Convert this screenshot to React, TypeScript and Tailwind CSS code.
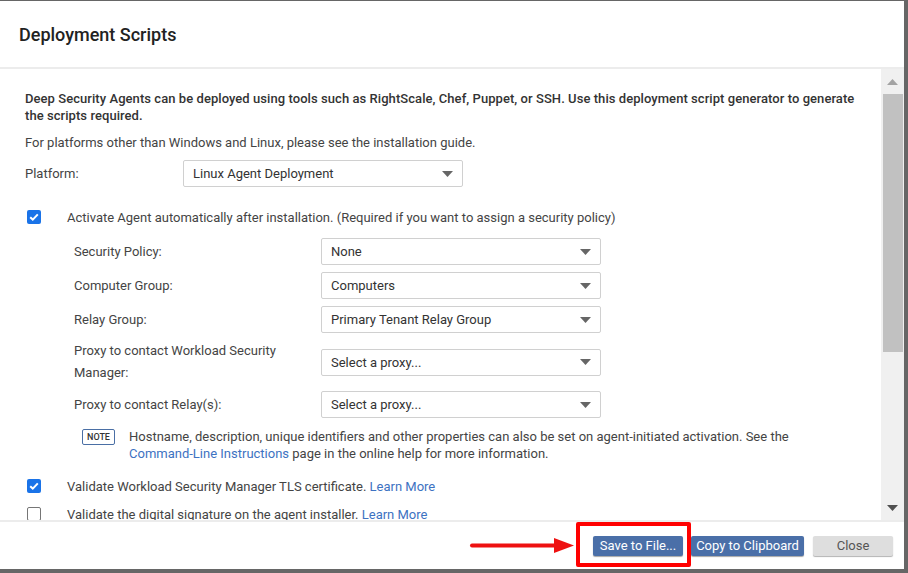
import { ReactNode } from 'react';

function Caret() {
  return (
    <svg width="11" height="6" viewBox="0 0 11 6" className="shrink-0">
      <path d="M0 0 L11 0 L5.5 6 Z" fill="#666" />
    </svg>
  );
}

function Select({ value, width = 'w-[280px]' }: { value: string; width?: string }) {
  return (
    <div
      className={`${width} h-[27px] shrink-0 flex items-center justify-between pl-[9px] pr-[9px] border border-[#d0d0d0] rounded-[2px] bg-white text-[13px] text-[#333]`}
    >
      <span>{value}</span>
      <Caret />
    </div>
  );
}

function Checkbox({ checked }: { checked: boolean }) {
  if (!checked) {
    return <div className="w-[14px] h-[14px] rounded-[2px] border border-[#767676] bg-white shrink-0" />;
  }
  return (
    <div className="w-[14px] h-[14px] rounded-[2px] bg-[#1a73e8] flex items-center justify-center shrink-0">
      <svg width="10" height="8" viewBox="0 0 10 8">
        <path d="M1.2 4.2 L3.8 6.6 L8.8 1.4" stroke="white" strokeWidth="2" fill="none" />
      </svg>
    </div>
  );
}

function CheckRow({ checked, children }: { checked: boolean; children: ReactNode }) {
  return (
    <div className="h-[28px] flex items-center">
      <div className="w-[42px] pl-[2px]">
        <Checkbox checked={checked} />
      </div>
      <div>{children}</div>
    </div>
  );
}

function FieldRow({ label, value, tall }: { label: ReactNode; value: string; tall?: boolean }) {
  return (
    <div className={`flex items-center pl-[49px] ${tall ? 'h-[44px]' : 'h-[27px]'}`}>
      <div className="w-[247px] leading-[22px]">{label}</div>
      <Select value={value} />
    </div>
  );
}

function Link({ children }: { children: ReactNode }) {
  return <span className="text-[#3d72c2]">{children}</span>;
}

export default function App() {
  return (
    <div className="relative w-[908px] h-[573px] bg-[#666] pt-[1px] overflow-hidden font-['Roboto',sans-serif]">
      <div className="w-[904px] h-[568px] bg-white flex flex-col">
        {/* header */}
        <div className="h-[68px] shrink-0 flex items-center px-[19px] border-b-2 border-[#ececec]">
          <h1 className="text-[18px] font-medium text-[#222]">Deployment Scripts</h1>
        </div>

        {/* scrolling body */}
        <div className="h-[453px] shrink-0 flex border-b-2 border-[#ececec]">
          <div className="flex-1 overflow-hidden pl-[25px] pr-[20px] pt-[21px] text-[13px] text-[#444] leading-[17px]">
            <p className="font-medium text-[#333] tracking-[0.06px]">
              Deep Security Agents can be deployed using tools such as RightScale, Chef, Puppet, or SSH. Use this
              deployment script generator to generate the scripts required.
            </p>
            <p className="mt-[10px]">For platforms other than Windows and Linux, please see the installation guide.</p>

            <div className="mt-[9px] flex items-center h-[27px]">
              <div className="w-[158px]">Platform:</div>
              <Select value="Linux Agent Deployment" />
            </div>

            <div className="mt-[16px] flex flex-col gap-[7px]">
              <CheckRow checked>
                Activate Agent automatically after installation. (Required if you want to assign a security policy)
              </CheckRow>
              <FieldRow label="Security Policy:" value="None" />
              <FieldRow label="Computer Group:" value="Computers" />
              <FieldRow label="Relay Group:" value="Primary Tenant Relay Group" />
              <FieldRow
                label={
                  <>
                    Proxy to contact Workload Security
                    <br />
                    Manager:
                  </>
                }
                value="Select a proxy..."
                tall
              />
              <FieldRow label="Proxy to contact Relay(s):" value="Select a proxy..." />
            </div>

            <div className="mt-[10px] flex pl-[57px]">
              <div className="w-[47px] shrink-0 pt-[1px]">
                <div className="w-[33px] h-[16px] border-[1.5px] border-[#4a6fa5] rounded-[2px] flex items-center justify-center text-[9px] font-medium text-[#333]">
                  NOTE
                </div>
              </div>
              <p className="w-[672px]">
                Hostname, description, unique identifiers and other properties can also be set on agent-initiated
                activation. See the <Link>Command-Line Instructions</Link> page in the online help for more
                information.
              </p>
            </div>

            <div className="mt-[10px]">
              <CheckRow checked>
                Validate Workload Security Manager TLS certificate. <Link>Learn More</Link>
              </CheckRow>
              <CheckRow checked={false}>
                Validate the digital signature on the agent installer. <Link>Learn More</Link>
              </CheckRow>
            </div>
          </div>

          {/* scrollbar */}
          <div className="w-[23px] bg-[#f0f0f0] flex flex-col items-center">
            <div className="h-[25px] flex items-center justify-center">
              <svg width="11" height="6" viewBox="0 0 11 6">
                <path d="M0 6 L11 6 L5.5 0 Z" fill="#a3a3a3" />
              </svg>
            </div>
            <div className="w-[20px] h-[258px] bg-[#c1c1c1]" />
            <div className="flex-1" />
            <div className="h-[24px] flex items-center justify-center">
              <svg width="11" height="6" viewBox="0 0 11 6">
                <path d="M0 0 L11 0 L5.5 6 Z" fill="#505050" />
              </svg>
            </div>
          </div>
        </div>

        {/* footer */}
        <div className="flex-1 flex items-center justify-end gap-[8px] pr-[11px] text-[13px]">
          <button className="w-[90px] h-[20px] bg-[#4a6fa8] text-white rounded-[2px] shadow-[0_1px_1px_rgba(0,0,0,0.35)]">
            Save to File...
          </button>
          <button className="w-[113px] h-[20px] bg-[#4a6fa8] text-white rounded-[2px] shadow-[0_1px_1px_rgba(0,0,0,0.35)]">
            Copy to Clipboard
          </button>
          <button className="ml-[1px] w-[80px] h-[20px] bg-[#dedede] text-[#555] rounded-[2px] shadow-[0_1px_1px_rgba(0,0,0,0.3)]">
            Close
          </button>
        </div>
      </div>

      {/* annotation */}
      <div className="absolute left-[576px] top-[522px] w-[115px] h-[45px] border-4 border-[#ff0000] rounded-[2px]" />
      <svg className="absolute left-[468px] top-[536px]" width="110" height="20" viewBox="0 0 110 20">
        <line x1="4" y1="9.5" x2="90" y2="9.5" stroke="#ee1111" strokeWidth="4" strokeLinecap="round" />
        <path d="M86 2 L106 9.5 L86 17 Z" fill="#ee1111" />
      </svg>
    </div>
  );
}
